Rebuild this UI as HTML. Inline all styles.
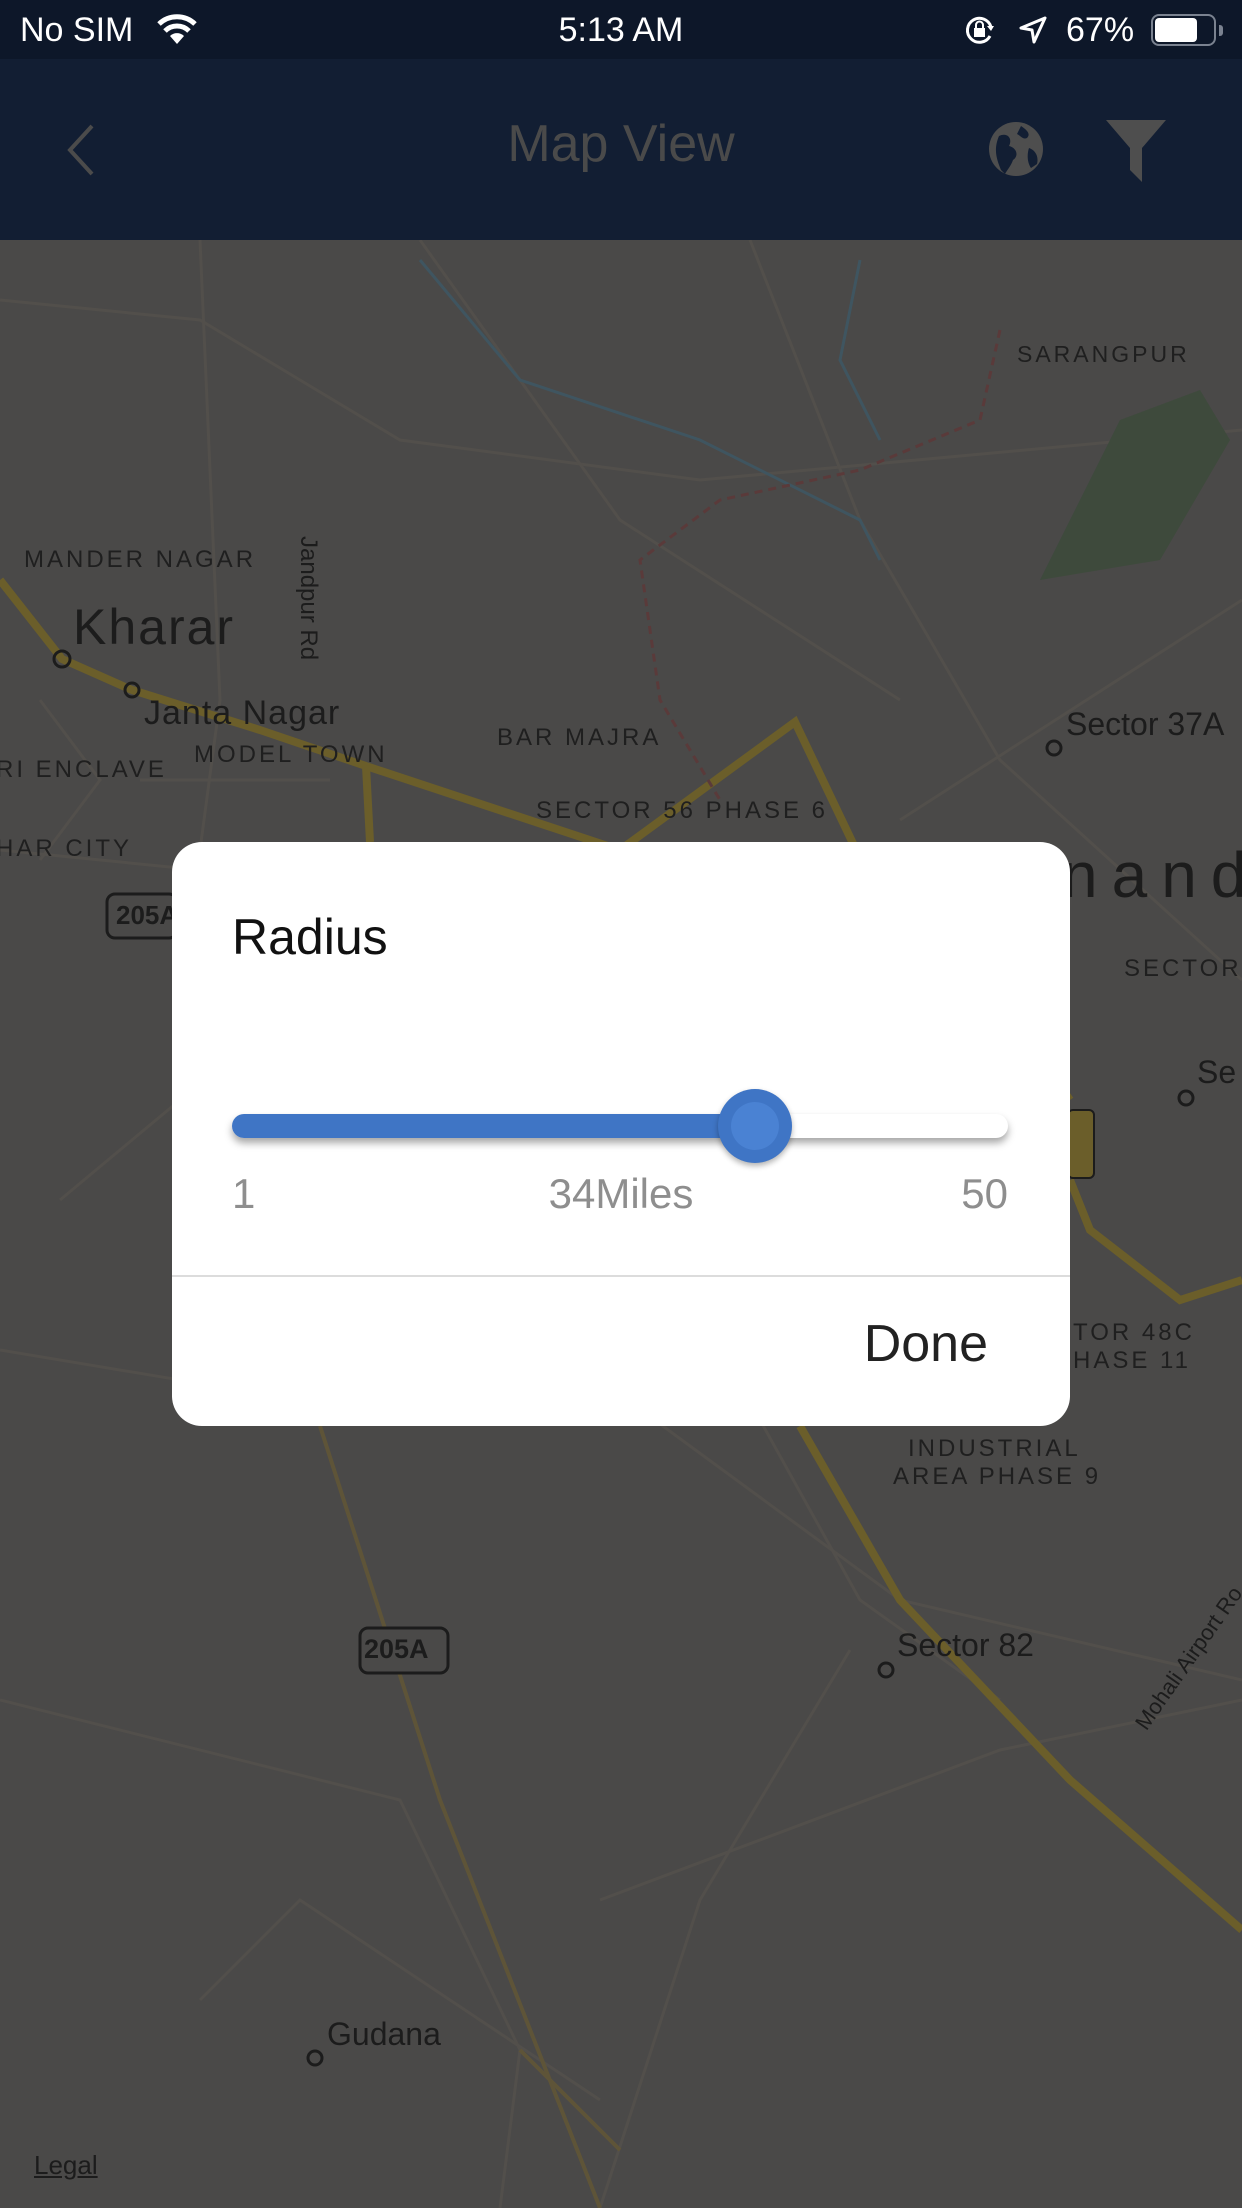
<!DOCTYPE html>
<html><head><meta charset="utf-8"><style>
*{margin:0;padding:0;box-sizing:border-box}
body{width:1242px;height:2208px;overflow:hidden;background:#4a4948;font-family:"Liberation Sans",sans-serif;position:relative}
.abs{position:absolute;white-space:nowrap}
.ml{color:#1f1f1f;font-size:24px;letter-spacing:3px}
.mt{color:#1c1c1c}
</style></head><body>
<svg class="abs" style="left:0;top:240px" width="1242" height="1968" viewBox="0 240 1242 1968">
<g fill="none" stroke="#524f4b" stroke-width="3">
<path d="M0 300 L200 320 L400 440 L700 480 L1242 430"/>
<path d="M200 240 L220 700 L180 1000"/>
<path d="M0 850 L300 880 L500 960"/>
<path d="M750 240 L860 520 L1000 760 L1242 980"/>
<path d="M420 240 L620 520 L900 700"/>
<path d="M1242 600 L900 820"/>
<path d="M0 1350 L300 1400 L600 1380 L900 1600 L1242 1680"/>
<path d="M600 1900 L1000 1750 L1242 1700"/>
<path d="M0 1700 L400 1800 L520 2050 L500 2208"/>
<path d="M850 1650 L700 1900 L600 2208"/>
<path d="M760 1420 L860 1600 L1000 1700"/>
<path d="M200 2000 L300 1900 L600 2100"/>
<path d="M40 700 L100 780 L40 860 M140 780 H330 M300 1000 L60 1200"/>
</g>
<g fill="none" stroke="#3f5560" stroke-width="3">
<path d="M420 260 L520 380 L700 440 L860 520 L880 560"/>
<path d="M860 260 L840 360 L880 440"/>
</g>
<g fill="none" stroke="#6b5e2a" stroke-width="8">
<path d="M0 580 L62 659 L132 690 L260 730 L366 766 L620 850"/>
<path d="M620 850 L795 722 L880 900 L1000 1000 L1070 1100"/>
<path d="M1070 1180 L1090 1230 L1180 1300 L1242 1280"/>
<path d="M800 1426 L900 1600 L1070 1780 L1242 1930"/>
<path d="M366 766 L370 842"/>
</g>
<g fill="none" stroke="#5e5438" stroke-width="4">
<path d="M320 1426 L440 1800 L600 2208"/>
<path d="M520 2050 L620 2150"/>
</g>
<path d="M1000 330 L980 420 L860 470 L720 500 L640 560 L660 700 L720 800" fill="none" stroke="#5a3a3a" stroke-width="3" stroke-dasharray="8 6"/>
<path d="M1120 420 L1200 390 L1230 440 L1160 560 L1040 580 Z" fill="#3e4a3c"/>
<g fill="none" stroke="#1c1c1c" stroke-width="3">
<circle cx="62" cy="659" r="8"/><circle cx="132" cy="690" r="7"/>
<circle cx="1054" cy="748" r="7"/><circle cx="1186" cy="1098" r="7"/>
<circle cx="886" cy="1670" r="7"/><circle cx="315" cy="2058" r="7"/>
</g>
<rect x="107" y="894" width="70" height="44" rx="8" fill="#4a4948" stroke="#1c1c1c" stroke-width="3"/>
<rect x="360" y="1628" width="88" height="45" rx="8" fill="#4a4948" stroke="#1c1c1c" stroke-width="3"/>
<rect x="1068" y="1110" width="26" height="68" rx="5" fill="#6b5e2a" stroke="#1c1c1c" stroke-width="2"/>
</svg>
<div class="abs ml" style="left:1017px;top:341px;font-size:23px">SARANGPUR</div>
<div class="abs ml" style="left:24px;top:546px">MANDER NAGAR</div>
<div class="abs mt" style="left:73px;top:598px;font-size:50px;letter-spacing:2px">Kharar</div>
<div class="abs mt" style="left:144px;top:694px;font-size:34px;letter-spacing:1px">Janta Nagar</div>
<div class="abs mt" style="top:536px;font-size:24px;transform:rotate(90deg);transform-origin:0 0;left:322px">Jandpur Rd</div>
<div class="abs ml" style="left:497px;top:724px">BAR MAJRA</div>
<div class="abs ml" style="left:-4px;top:756px">RI ENCLAVE</div>
<div class="abs ml" style="left:194px;top:741px">MODEL TOWN</div>
<div class="abs ml" style="left:536px;top:797px">SECTOR 56 PHASE 6</div>
<div class="abs ml" style="left:-4px;top:835px">HAR CITY</div>
<div class="abs mt" style="left:1066px;top:706px;font-size:32px">Sector 37A</div>
<div class="abs mt" style="left:1062px;top:838px;font-size:64px;letter-spacing:14px">nand</div>
<div class="abs ml" style="left:1124px;top:955px">SECTOR</div>
<div class="abs mt" style="left:1197px;top:1054px;font-size:32px">Se</div>
<div class="abs mt" style="left:116px;top:900px;font-size:26px;font-weight:bold">205A</div>
<div class="abs ml" style="left:1073px;top:1319px">TOR 48C</div>
<div class="abs ml" style="left:1073px;top:1347px">HASE 11</div>
<div class="abs ml" style="left:908px;top:1435px">INDUSTRIAL</div>
<div class="abs ml" style="left:893px;top:1463px">AREA PHASE 9</div>
<div class="abs mt" style="left:364px;top:1634px;font-size:27px;font-weight:bold">205A</div>
<div class="abs mt" style="left:897px;top:1627px;font-size:32px">Sector 82</div>
<div class="abs mt" style="left:1130px;top:1720px;font-size:22px;transform:rotate(-55deg);transform-origin:0 0">Mohali Airport Ro</div>
<div class="abs mt" style="left:327px;top:2016px;font-size:32px">Gudana</div>
<div class="abs mt" style="left:34px;top:2150px;font-size:26px;text-decoration:underline">Legal</div>

<div class="abs" style="left:0;top:0;width:1242px;height:59px;background:#0d1729"></div>
<div class="abs" style="left:20px;top:11px;font-size:34px;color:#fff">No SIM</div>
<svg class="abs" style="left:156px;top:14px" width="42" height="32" viewBox="0 0 42 32"><path d="M21 30 L14 22 A10 10 0 0 1 28 22 Z" fill="#fff"/><path d="M9 17 A17 17 0 0 1 33 17" stroke="#fff" stroke-width="5" fill="none"/><path d="M3 10 A26 26 0 0 1 39 10" stroke="#fff" stroke-width="5" fill="none"/></svg>
<div class="abs" style="left:0;width:1242px;text-align:center;top:11px;font-size:34px;color:#fff">5:13 AM</div>
<svg class="abs" style="left:964px;top:14px" width="32" height="32" viewBox="0 0 32 32"><path d="M26 22 A12 12 0 1 1 27 13" stroke="#fff" stroke-width="3" fill="none"/><path d="M23 12 L30 12 L27 17Z" fill="#fff"/><rect x="10" y="14" width="11" height="9" fill="#fff"/><path d="M12 14 V11 A3.5 3.5 0 0 1 19 11 V14" stroke="#fff" stroke-width="2" fill="none"/></svg>
<svg class="abs" style="left:1018px;top:15px" width="30" height="30" viewBox="0 0 30 30"><path d="M27 3 L3 13 L14 15 L16 27 Z" stroke="#fff" stroke-width="3" fill="none" stroke-linejoin="round"/></svg>
<div class="abs" style="left:1066px;top:11px;font-size:34px;color:#fff">67%</div>
<div class="abs" style="left:1151px;top:14px;width:65px;height:32px;border:2px solid #7a8290;border-radius:8px"></div>
<div class="abs" style="left:1155px;top:18px;width:42px;height:24px;background:#fff;border-radius:4px"></div>
<div class="abs" style="left:1219px;top:25px;width:4px;height:11px;background:#7a8290;border-radius:0 3px 3px 0"></div>

<div class="abs" style="left:0;top:59px;width:1242px;height:181px;background:#121e33"></div>
<svg class="abs" style="left:60px;top:122px" width="40" height="56" viewBox="0 0 40 56"><path d="M32 4 L10 28 L32 52" stroke="#4b4b4b" stroke-width="4" fill="none"/></svg>
<div class="abs" style="left:0;width:1242px;text-align:center;top:114px;font-size:52px;color:#4a4a4a">Map View</div>
<svg class="abs" style="left:987px;top:120px" width="58" height="58" viewBox="0 0 58 58"><circle cx="29" cy="29" r="27" fill="#4e4e4e"/><path d="M12 16 C20 12 26 18 22 26 C30 28 32 36 26 40 C24 46 20 50 18 54 L14 50 C10 40 6 30 12 16Z M34 6 C40 10 44 14 40 18 C36 20 34 16 30 14Z M42 28 C48 30 52 36 50 44 L44 48 C40 42 40 34 42 28Z" fill="#121e33"/></svg>
<svg class="abs" style="left:1104px;top:118px" width="64" height="66" viewBox="0 0 64 66"><path d="M2 2 H62 L38 30 V64 L26 52 V30 Z" fill="#4e4e4e"/></svg>

<div class="abs" style="left:172px;top:842px;width:898px;height:584px;background:#fff;border-radius:30px"></div>
<div class="abs" style="left:232px;top:908px;font-size:50px;color:#111">Radius</div>
<div class="abs" style="left:232px;top:1114px;width:776px;height:24px;background:#fff;border-radius:12px;box-shadow:0 5px 8px rgba(0,0,0,0.35)"></div>
<div class="abs" style="left:232px;top:1114px;width:523px;height:24px;background:#3f75c5;border-radius:12px 0 0 12px"></div>
<div class="abs" style="left:718px;top:1089px;width:74px;height:74px;background:#3f75c5;border-radius:50%;box-shadow:0 3px 6px rgba(0,0,0,0.3)"></div>
<div class="abs" style="left:731px;top:1102px;width:48px;height:48px;background:#4a82d3;border-radius:50%"></div>
<div class="abs" style="left:232px;top:1170px;font-size:42px;color:#8e8e8e">1</div>
<div class="abs" style="left:0;width:1242px;text-align:center;top:1170px;font-size:42px;color:#8e8e8e">34Miles</div>
<div class="abs" style="left:908px;width:100px;text-align:right;top:1170px;font-size:42px;color:#8e8e8e">50</div>
<div class="abs" style="left:172px;top:1275px;width:898px;height:2px;background:#dcdcdc"></div>
<div class="abs" style="left:800px;width:188px;text-align:right;top:1314px;font-size:52px;color:#222">Done</div>
</body></html>
